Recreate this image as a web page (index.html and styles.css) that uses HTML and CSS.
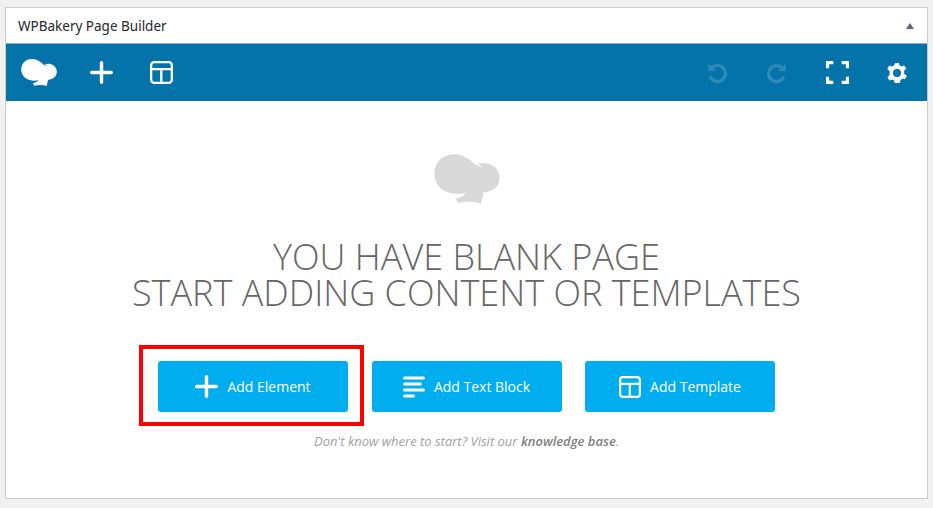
FILE: index.html
```html
<!DOCTYPE html>
<html lang="en">
<head>
<meta charset="utf-8">
<title>WPBakery Page Builder</title>
<link rel="stylesheet" href="styles.css">
</head>
<body>
<svg class="defs" width="0" height="0" aria-hidden="true">
  <defs>
    <symbol id="hat" viewBox="100 44 200 150">
      <path d="M160 44C188 44 206 58 224 74C232 79 242 82 250 83C244 80 238 77 232 74C246 68 264 69 276 77C292 86 299 100 299 115C299 140 280 156 250 160L243 194C222 186 195 187 174 192L165 179C180 177 190 171 197 161C185 165 172 165 160 163C125 160 101 135 101 103C101 70 125 44 160 44Z"/>
    </symbol>
    <symbol id="tpl" viewBox="0 0 22 22">
      <path d="M4 1.1H18A2.9 2.9 0 0 1 20.9 4V18A2.9 2.9 0 0 1 18 20.9H4A2.9 2.9 0 0 1 1.1 18V4A2.9 2.9 0 0 1 4 1.1ZM1 7.8H21M10.8 7.8V21" fill="none" stroke="currentColor" stroke-width="2.2"/>
    </symbol>
    <symbol id="plus" viewBox="0 0 23 23">
      <path d="M11.5 1.7V21.3M1.7 11.5H21.3" fill="none" stroke="currentColor" stroke-width="3.4" stroke-linecap="round"/>
    </symbol>
  </defs>
</svg>
<main class="panel">
  <header class="panel-head">
    <h2 class="panel-title">WPBakery Page Builder</h2>
    <span class="caret"></span>
  </header>
  <nav class="toolbar">
    <div class="tool-group">
      <svg class="logo"><use href="#hat"/></svg>
      <svg class="tool-plus"><use href="#plus"/></svg>
      <svg class="tool-tpl"><use href="#tpl"/></svg>
    </div>
    <div class="tool-group tool-right">
      <svg class="tool-history" viewBox="0 0 22 22"><path d="M2.5 1.5L10 9H2.5Z" fill="currentColor"/><path d="M5.2 6.5A8 8 0 1 1 4 14.5" fill="none" stroke="currentColor" stroke-width="3.2"/></svg>
      <svg class="tool-history" viewBox="0 0 22 22"><path d="M19.5 1.5L12 9H19.5Z" fill="currentColor"/><path d="M16.8 6.5A8 8 0 1 0 18 14.5" fill="none" stroke="currentColor" stroke-width="3.2"/></svg>
      <svg class="tool-full" viewBox="0 0 22 22"><path d="M1.5 7V1.5H7M15 1.5H20.5V7M20.5 15V20.5H15M7 20.5H1.5V15" fill="none" stroke="currentColor" stroke-width="3"/></svg>
      <svg class="tool-gear" viewBox="0 0 20 20"><path fill-rule="evenodd" d="M8 0H12L12.6 2.6L14.6 3.5L17 2.2L19.2 5.6L17.2 7.4V11L19.9 12.8L18 16.2L15.4 15.6L13.6 17.2L12.6 20H7.6L7 17.4L5 16.4L2.4 17.6L.4 14.2L2.6 12V8L.2 6L2.2 2.6L5 3.6L7 2.6ZM10 6A4 4 0 1 0 10 14A4 4 0 1 0 10 6Z"/></svg>
    </div>
  </nav>
  <section class="blank">
    <svg class="hero-hat"><use href="#hat"/></svg>
    <h1 class="blank-title">You have blank page<br>start adding content or templates</h1>
    <div class="actions">
      <a class="btn btn-marked" href="#">
        <svg class="btn-plus"><use href="#plus"/></svg>Add Element
        <span class="marker"></span>
      </a>
      <a class="btn" href="#">
        <svg class="btn-lines" viewBox="0 0 22 22"><path d="M1.5 2H20.5M1.5 8H17.5M1.5 14H20.5M1.5 20H10.5" fill="none" stroke="currentColor" stroke-width="3" stroke-linecap="round"/></svg>Add Text Block
      </a>
      <a class="btn" href="#">
        <svg class="btn-tpl"><use href="#tpl"/></svg>Add Template
      </a>
    </div>
    <p class="hint">Don't know where to start? Visit our <b>knowledge base</b>.</p>
  </section>
</main>
</body>
</html>
```
FILE: styles.css
```css
* { box-sizing: border-box; }
html, body { height: 100%; }
body {
  margin: 0;
  padding: 7px 5px 9px;
  background: #f1f1f1;
  font-family: "Open Sans", sans-serif;
  overflow: hidden;
}
.defs { position: absolute; }
svg { display: block; flex: none; }
.panel {
  height: 492px;
  display: flex;
  flex-direction: column;
  background: #fff;
  border: 1px solid #ccc;
}
.panel-head {
  height: 35px;
  flex: none;
  display: flex;
  align-items: center;
  justify-content: space-between;
  padding: 0 13px 0 12px;
}
.panel-title {
  margin: 0;
  font: 400 13.5px "Noto Sans", sans-serif;
  color: #23282d;
}
.caret {
  width: 0;
  height: 0;
  border: 4px solid transparent;
  border-top: 0;
  border-bottom: 6px solid #5f6872;
}
.toolbar {
  height: 58px;
  flex: none;
  display: flex;
  align-items: center;
  justify-content: space-between;
  background: #0473aa;
  border-top: 1px solid #7fb0cd;
  color: #fff;
  padding: 0 20px 0 15px;
}
.tool-group { display: flex; align-items: center; }
.logo { width: 36px; height: 27px; fill: #fff; margin-right: 33px; }
.tool-plus { width: 23px; height: 23px; margin-right: 37px; }
.tool-tpl { width: 23px; height: 23px; }
.tool-history { width: 22px; height: 22px; color: #2f8ab9; margin-right: 38px; }
.tool-full { width: 23px; height: 23px; margin-right: 38px; }
.tool-gear { width: 20px; height: 20px; fill: #fff; }
.blank {
  flex: 1;
  display: flex;
  flex-direction: column;
  align-items: center;
  padding-top: 53px;
}
.hero-hat { width: 66px; height: 50px; fill: #d8d8d8; }
.blank-title {
  margin: 35px 0 0;
  font-size: 36px;
  line-height: 36px;
  font-weight: 300;
  text-align: center;
  text-transform: uppercase;
  color: #666;
}
.actions {
  display: flex;
  gap: 23.5px;
  margin-top: 50px;
}
.btn {
  position: relative;
  width: 190px;
  height: 51px;
  display: flex;
  align-items: center;
  justify-content: center;
  gap: 9px;
  background: #00aeef;
  border-radius: 3px;
  color: #fff;
  font-size: 14px;
  text-decoration: none;
}
.btn-plus { width: 23px; height: 23px; color: #fff; }
.btn-lines { width: 22px; height: 22px; }
.btn-tpl { width: 22px; height: 22px; }
.marker {
  position: absolute;
  inset: -16px -16px -14px -19px;
  border: 4px solid #f00;
}
.hint {
  margin: 20px 0 0;
  font-size: 13px;
  line-height: 18px;
  font-style: italic;
  color: #a0a0a0;
}
.hint b { font-weight: 600; color: #808080; }
```
